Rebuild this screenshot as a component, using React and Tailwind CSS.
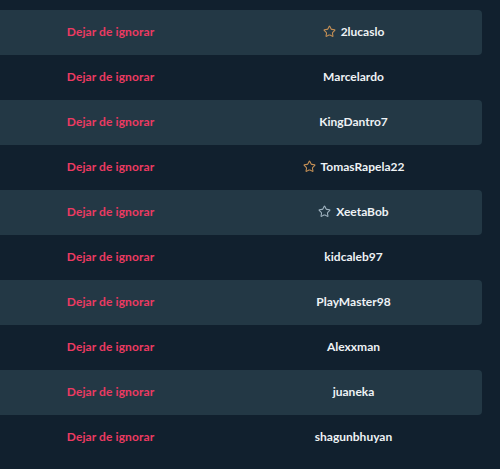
import { Star } from 'lucide-react'

const users = [
  { name: '2lucaslo', star: 'gold' },
  { name: 'Marcelardo' },
  { name: 'KingDantro7' },
  { name: 'TomasRapela22', star: 'gold' },
  { name: 'XeetaBob', star: 'gray' },
  { name: 'kidcaleb97' },
  { name: 'PlayMaster98' },
  { name: 'Alexxman' },
  { name: 'juaneka' },
  { name: 'shagunbhuyan' },
]

export default function App() {
  return (
    <div className="min-h-screen w-[500px] bg-[#11202e] pt-[10px] pr-[18px]" style={{ fontFamily: 'Lato, "Open Sans", sans-serif' }}>
      <div className="flex flex-col">
        {users.map((u, i) => (
          <div
            key={u.name}
            className={`flex h-[45px] items-center pb-[2px] text-[12px] font-bold ${i % 2 === 0 ? 'bg-[#233845] rounded-r-[4px]' : ''}`}
          >
            <div className="w-[221px] text-center">
              <button className="text-[#ec3a62] tracking-[0.1px]">Dejar de ignorar</button>
            </div>
            <div className="flex flex-1 items-center justify-center gap-[5px] pl-[4px] text-[#eef2f5]">
              {u.star && (
                <Star
                  size={13}
                  strokeWidth={2}
                  className={u.star === 'gold' ? 'text-[#c48f55]' : 'text-[#9fb2bf]'}
                />
              )}
              <span>{u.name}</span>
            </div>
          </div>
        ))}
      </div>
    </div>
  )
}
